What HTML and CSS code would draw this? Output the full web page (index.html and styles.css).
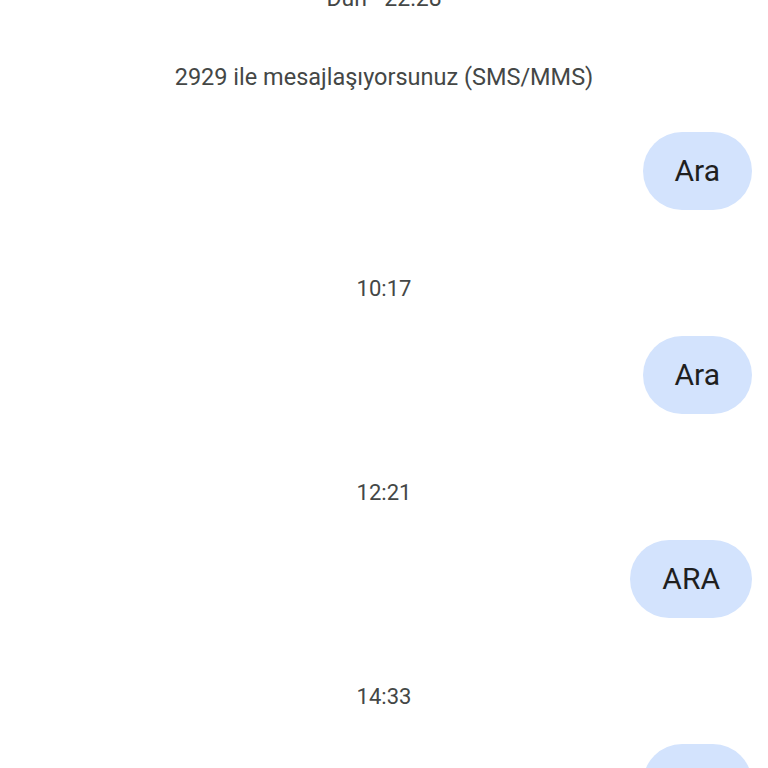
FILE: index.html
```html
<!DOCTYPE html>
<html lang="tr">
<head>
<meta charset="utf-8">
<link rel="stylesheet" href="styles.css">
</head>
<body>
<main class="thread">
  <div class="stamp stamp-top">Dün · 22:28</div>
  <div class="stamp stamp-info">2929 ile mesajlaşıyorsunuz (SMS/MMS)</div>
  <div class="row row-first"><div class="bubble">Ara</div></div>
  <div class="stamp stamp-time">10:17</div>
  <div class="row"><div class="bubble">Ara</div></div>
  <div class="stamp stamp-time">12:21</div>
  <div class="row"><div class="bubble">ARA</div></div>
  <div class="stamp stamp-time">14:33</div>
  <div class="row"><div class="bubble">Ara</div></div>
</main>
</body>
</html>
```

FILE: styles.css
```css
html, body {
  margin: 0;
  padding: 0;
  background: #ffffff;
  overflow: hidden;
  height: 768px;
}
.thread {
  display: flex;
  flex-direction: column;
  padding: 0 16px 0 16px;
  font-family: Roboto, "Noto Sans", sans-serif;
}
.stamp {
  text-align: center;
  color: #444746;
  font-size: 22px;
  line-height: 30px;
  height: 30px;
}
.stamp-top {
  margin-top: -16px;
  font-size: 23px;
}
.stamp-info {
  margin-top: 48px;
  font-size: 23.5px;
}
.stamp-time {
  margin-top: 64px;
}
.row {
  display: flex;
  justify-content: flex-end;
  margin-top: 32px;
}
.row-first {
  margin-top: 40px;
}
.bubble {
  background: #d3e3fd;
  color: #1f1f1f;
  font-size: 30px;
  height: 78px;
  line-height: 78px;
  padding: 0 32px;
  border-radius: 39px;
}
```
